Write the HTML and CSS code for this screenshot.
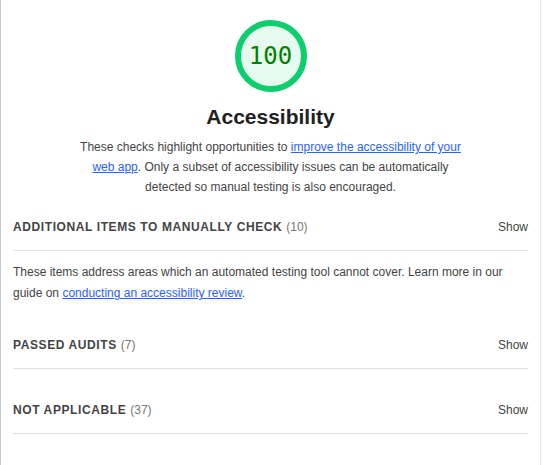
FILE: index.html
```html
<!DOCTYPE html>
<html lang="en">
<head>
<meta charset="utf-8">
<title>Accessibility</title>
<link rel="stylesheet" href="styles.css">
</head>
<body>
<div class="panel">
  <div class="summary">
    <div class="gauge">
      <svg class="gauge-svg" width="72" height="72" viewBox="0 0 72 72">
        <circle cx="36" cy="36" r="33" fill="#e7faf0" stroke="#0cce6b" stroke-width="6"/>
      </svg>
      <span class="gauge-value">100</span>
    </div>
    <h1 class="title">Accessibility</h1>
    <p class="desc">These checks highlight opportunities to <a href="#">improve the accessibility of your web app</a>. Only a subset of accessibility issues can be automatically detected so manual testing is also encouraged.</p>
  </div>

  <div class="group">
    <div class="group-head">
      <span class="group-title">Additional items to manually check <span class="count">(10)</span></span>
      <span class="show">Show</span>
    </div>
    <p class="group-desc">These items address areas which an automated testing tool cannot cover. Learn more in our guide on <a href="#">conducting an accessibility review</a>.</p>
  </div>

  <div class="group">
    <div class="group-head">
      <span class="group-title">Passed audits <span class="count">(7)</span></span>
      <span class="show">Show</span>
    </div>
  </div>

  <div class="group">
    <div class="group-head">
      <span class="group-title">Not applicable <span class="count">(37)</span></span>
      <span class="show">Show</span>
    </div>
  </div>
</div>
</body>
</html>
```

FILE: styles.css
```css
html, body {
  margin: 0;
  padding: 0;
  background: #ffffff;
}
body {
  font-family: "Liberation Sans", Arial, sans-serif;
  color: #212121;
}
.panel {
  width: 541px;
  min-height: 465px;
  box-sizing: border-box;
  border-left: 1px solid #c8ccd0;
  border-right: 1px solid #e4e4e4;
  padding-top: 20px;
}
.summary {
  display: flex;
  flex-direction: column;
  align-items: center;
}
.gauge {
  position: relative;
  width: 72px;
  height: 72px;
}
.gauge-svg {
  display: block;
}
.gauge-value {
  position: absolute;
  inset: 0;
  display: flex;
  align-items: center;
  justify-content: center;
  font-family: "DejaVu Sans Mono", "Liberation Mono", monospace;
  font-size: 24px;
  color: #008000;
}
.title {
  margin: 13px 0 0;
  font-size: 21px;
  line-height: 24px;
  font-weight: 700;
  color: #212121;
}
.desc {
  margin: 8px 0 0;
  width: 400px;
  font-size: 12px;
  line-height: 20px;
  text-align: center;
  color: #444444;
}
a {
  color: #2962ff;
  text-decoration: underline;
}
.group {
  padding: 0 12px;
}
.group + .group {
  margin-top: 18px;
}
.summary + .group {
  margin-top: 7px;
}
.group-head {
  display: flex;
  align-items: center;
  justify-content: space-between;
  height: 46px;
  border-bottom: 1px solid #e0e0e0;
  font-size: 12px;
}
.group-title {
  font-weight: 700;
  text-transform: uppercase;
  letter-spacing: 0.6px;
  color: #444444;
}
.count {
  font-weight: 400;
  letter-spacing: 0;
  color: #757575;
}
.show {
  color: #444444;
}
.group-desc {
  margin: 0;
  padding-top: 11px;
  font-size: 12px;
  line-height: 21px;
  color: #444444;
}
```
